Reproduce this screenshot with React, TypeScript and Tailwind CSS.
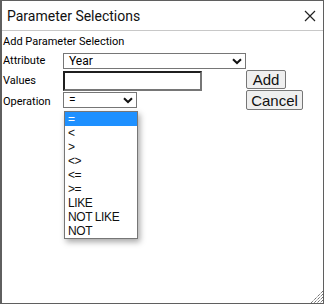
import React from 'react'

const ops = ['=', '<', '>', '<>', '<=', '>=', 'LIKE', 'NOT LIKE', 'NOT']

function Chevron() {
  return (
    <svg width="10" height="7" viewBox="0 0 10 7" className="shrink-0">
      <path d="M1 1.2 L5 5 L9 1.2" fill="none" stroke="#111" strokeWidth="2" />
    </svg>
  )
}

export default function App() {
  return (
    <div className="w-[324px] h-[304px] bg-white">
      <div className="relative w-[324px] h-[304px] border border-[#5f5f5f] border-l-2 bg-white flex flex-col font-['Roboto',sans-serif] text-black">
        {/* title bar */}
        <div className="h-[30px] flex items-center justify-between pl-[5px] pr-[6px] border-b border-[#c8c8c8] shrink-0">
          <span className="text-[14px] leading-none text-[#111]">Parameter Selections</span>
          <svg width="12" height="12" viewBox="0 0 12 12" className="mr-[1px]">
            <path d="M1 1 L11 11 M11 1 L1 11" stroke="#222" strokeWidth="1.2" />
          </svg>
        </div>

        <div className="pl-[1px] pt-[3px] text-[11px] leading-[16px]">
          <div>Add Parameter Selection</div>
          <div className="flex">
            <div className="w-[60px] flex flex-col">
              <div className="h-[20px] flex items-center mt-[1px]">Attribute</div>
              <div className="h-[20px] flex items-center">Values</div>
              <div className="h-[20px] flex items-center mt-[1px]">Operation</div>
            </div>
            <div className="flex flex-col">
              <div className="mt-[3px] w-[183px] h-[16px] border border-[#767676] flex items-center justify-between pl-[5px] pr-[3px] text-[12px]">
                <span>Year</span>
                <Chevron />
              </div>
              <div className="flex">
                <div className="mt-[2px] w-[139px] h-[20px] border-2 border-t-[#1f1f1f] border-l-[#1f1f1f] border-r-[#767676] border-b-[#767676] bg-white" />
                <div className="flex flex-col ml-[44px] font-['Liberation_Sans',sans-serif] leading-none">
                  <button className="mt-[1px] w-[40px] h-[19px] border border-[#767676] bg-[#efefef] rounded-[2px] text-[15px] leading-none text-[#111]">Add</button>
                  <button className="mt-[1px] w-[57px] h-[20px] border border-[#767676] bg-[#efefef] rounded-[2px] text-[15px] leading-none text-[#111]">Cancel</button>
                </div>
              </div>
              <div className="-mt-[18px] w-[74px] h-[16px] border border-[#767676] flex items-center justify-between pl-[5px] pr-[3px] text-[12px]">
                <span>=</span>
                <Chevron />
              </div>
            </div>
          </div>
        </div>

        {/* open dropdown list */}
        <div className="absolute left-[62px] top-[110px] w-[74px] border border-[#767676] bg-white shadow-[2px_3px_6px_rgba(0,0,0,0.35)] font-['Liberation_Sans',sans-serif] text-[12px] tracking-[-0.4px]">
          {ops.map((op, i) => (
            <div
              key={op}
              className={
                i === 0
                  ? 'h-[14px] leading-[14px] pl-[3px] bg-[#1e90ff] text-white'
                  : 'h-[14px] leading-[14px] pl-[3px] text-[#101010]'
              }
            >
              {op}
            </div>
          ))}
        </div>

        {/* resize grip */}
        <svg width="12" height="12" viewBox="0 0 12 12" className="absolute right-0 bottom-0">
          <path d="M12 0 L0 12 M12 3 L3 12 M12 6 L6 12 M12 9 L9 12" stroke="#333" strokeWidth="1" strokeDasharray="1 1" />
        </svg>
      </div>
    </div>
  )
}
